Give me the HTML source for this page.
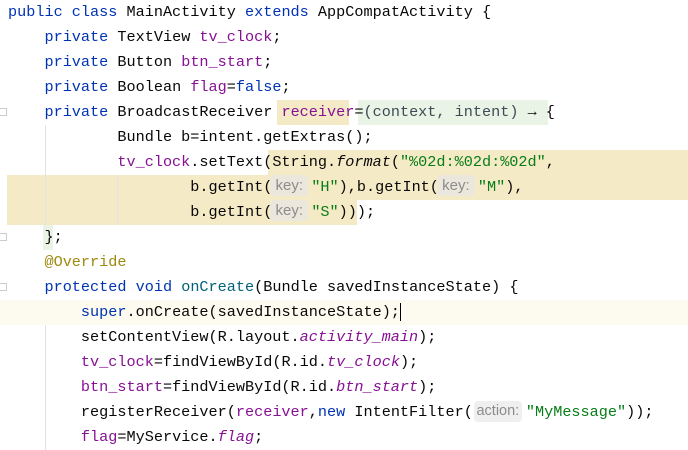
<!DOCTYPE html>
<html><head><meta charset="utf-8"><style>
body{margin:0;width:688px;height:450px;background:#fff;overflow:hidden;position:relative;font-family:"Liberation Mono",monospace;font-size:15.2px;color:#080808}
.l{position:absolute;left:8px;height:25px;line-height:25px;white-space:pre}
.k{color:#0033b3}.f{color:#871094}.s{color:#067d17}.a{color:#9e880d}.m{color:#00627a}.i{font-style:italic}.p{color:#3d4b55}
.h{display:inline-block;font-family:"Liberation Sans",sans-serif;font-size:15px;color:#8c8c8c;background:#ebe7dc;border-radius:4px;height:21px;line-height:21px;width:38px;text-align:center;margin-left:-2px;margin-right:3px;vertical-align:1px}
.hw{background:#efefef;width:48px;font-size:14.5px;margin-left:1px;margin-right:4px}
.bg{position:absolute}
.g{position:absolute;width:1px;background:#e2e2e2}
.fold{position:absolute;left:0;width:7px;height:8px;border:1px solid #ccc;border-left:none;box-sizing:border-box}
</style></head><body>
<div class="bg" style="left:0;top:300px;width:688px;height:25px;background:#fdfbef"></div>
<div class="bg" style="left:277px;top:100px;width:72px;height:25px;background:#f5eac6"></div>
<div class="bg" style="left:358px;top:100px;width:190px;height:25px;background:#eaf4e6"></div>
<div class="bg" style="left:268px;top:150px;width:420px;height:25px;background:#f5eac6"></div>
<div class="bg" style="left:7px;top:175px;width:681px;height:25px;background:#f5eac6"></div>
<div class="bg" style="left:7px;top:200px;width:350px;height:25px;background:#f5eac6"></div>
<div class="bg" style="left:43px;top:225px;width:10px;height:25px;background:#eaf4e6"></div>
<div class="g" style="left:45px;top:125px;height:100px"></div>
<div class="g" style="left:117px;top:175px;height:50px"></div>
<div class="g" style="left:45px;top:325px;height:125px"></div>
<div class="fold" style="top:108px"></div>
<div class="fold" style="top:233px"></div>
<div class="fold" style="top:283px"></div>
<div class="l" style="top:0"><span class="k">public class</span> MainActivity <span class="k">extends</span> AppCompatActivity {</div>
<div class="l" style="top:25px">    <span class="k">private</span> TextView <span class="f">tv_clock</span>;</div>
<div class="l" style="top:50px">    <span class="k">private</span> Button <span class="f">btn_start</span>;</div>
<div class="l" style="top:75px">    <span class="k">private</span> Boolean <span class="f">flag</span>=<span class="k">false</span>;</div>
<div class="l" style="top:100px">    <span class="k">private</span> BroadcastReceiver <span class="f">receiver</span>=<span class="p">(context, intent)</span> → {</div>
<div class="l" style="top:125px">            Bundle b=intent.getExtras();</div>
<div class="l" style="top:150px">            <span class="f">tv_clock</span>.setText(String.<span class="i">format</span>(<span class="s">"%02d:%02d:%02d"</span>,</div>
<div class="l" style="top:175px">                    b.getInt(<span class="h">key:</span><span class="s">"H"</span>),b.getInt(<span class="h">key:</span><span class="s">"M"</span>),</div>
<div class="l" style="top:200px">                    b.getInt(<span class="h">key:</span><span class="s">"S"</span>)));</div>
<div class="l" style="top:225px">    };</div>
<div class="l" style="top:250px">    <span class="a">@Override</span></div>
<div class="l" style="top:275px">    <span class="k">protected void</span> <span class="m">onCreate</span>(Bundle savedInstanceState) {</div>
<div class="l" style="top:300px">        <span class="k">super</span>.onCreate(savedInstanceState);<span style="border-left:1px solid #000"></span></div>
<div class="l" style="top:325px">        setContentView(R.layout.<span class="f i">activity_main</span>);</div>
<div class="l" style="top:350px">        <span class="f">tv_clock</span>=findViewById(R.id.<span class="f i">tv_clock</span>);</div>
<div class="l" style="top:375px">        <span class="f">btn_start</span>=findViewById(R.id.<span class="f i">btn_start</span>);</div>
<div class="l" style="top:400px">        registerReceiver(<span class="f">receiver</span>,<span class="k">new</span> IntentFilter(<span class="h hw">action:</span><span class="s">"MyMessage"</span>));</div>
<div class="l" style="top:425px">        <span class="f">flag</span>=MyService.<span class="f i">flag</span>;</div>
</body></html>
